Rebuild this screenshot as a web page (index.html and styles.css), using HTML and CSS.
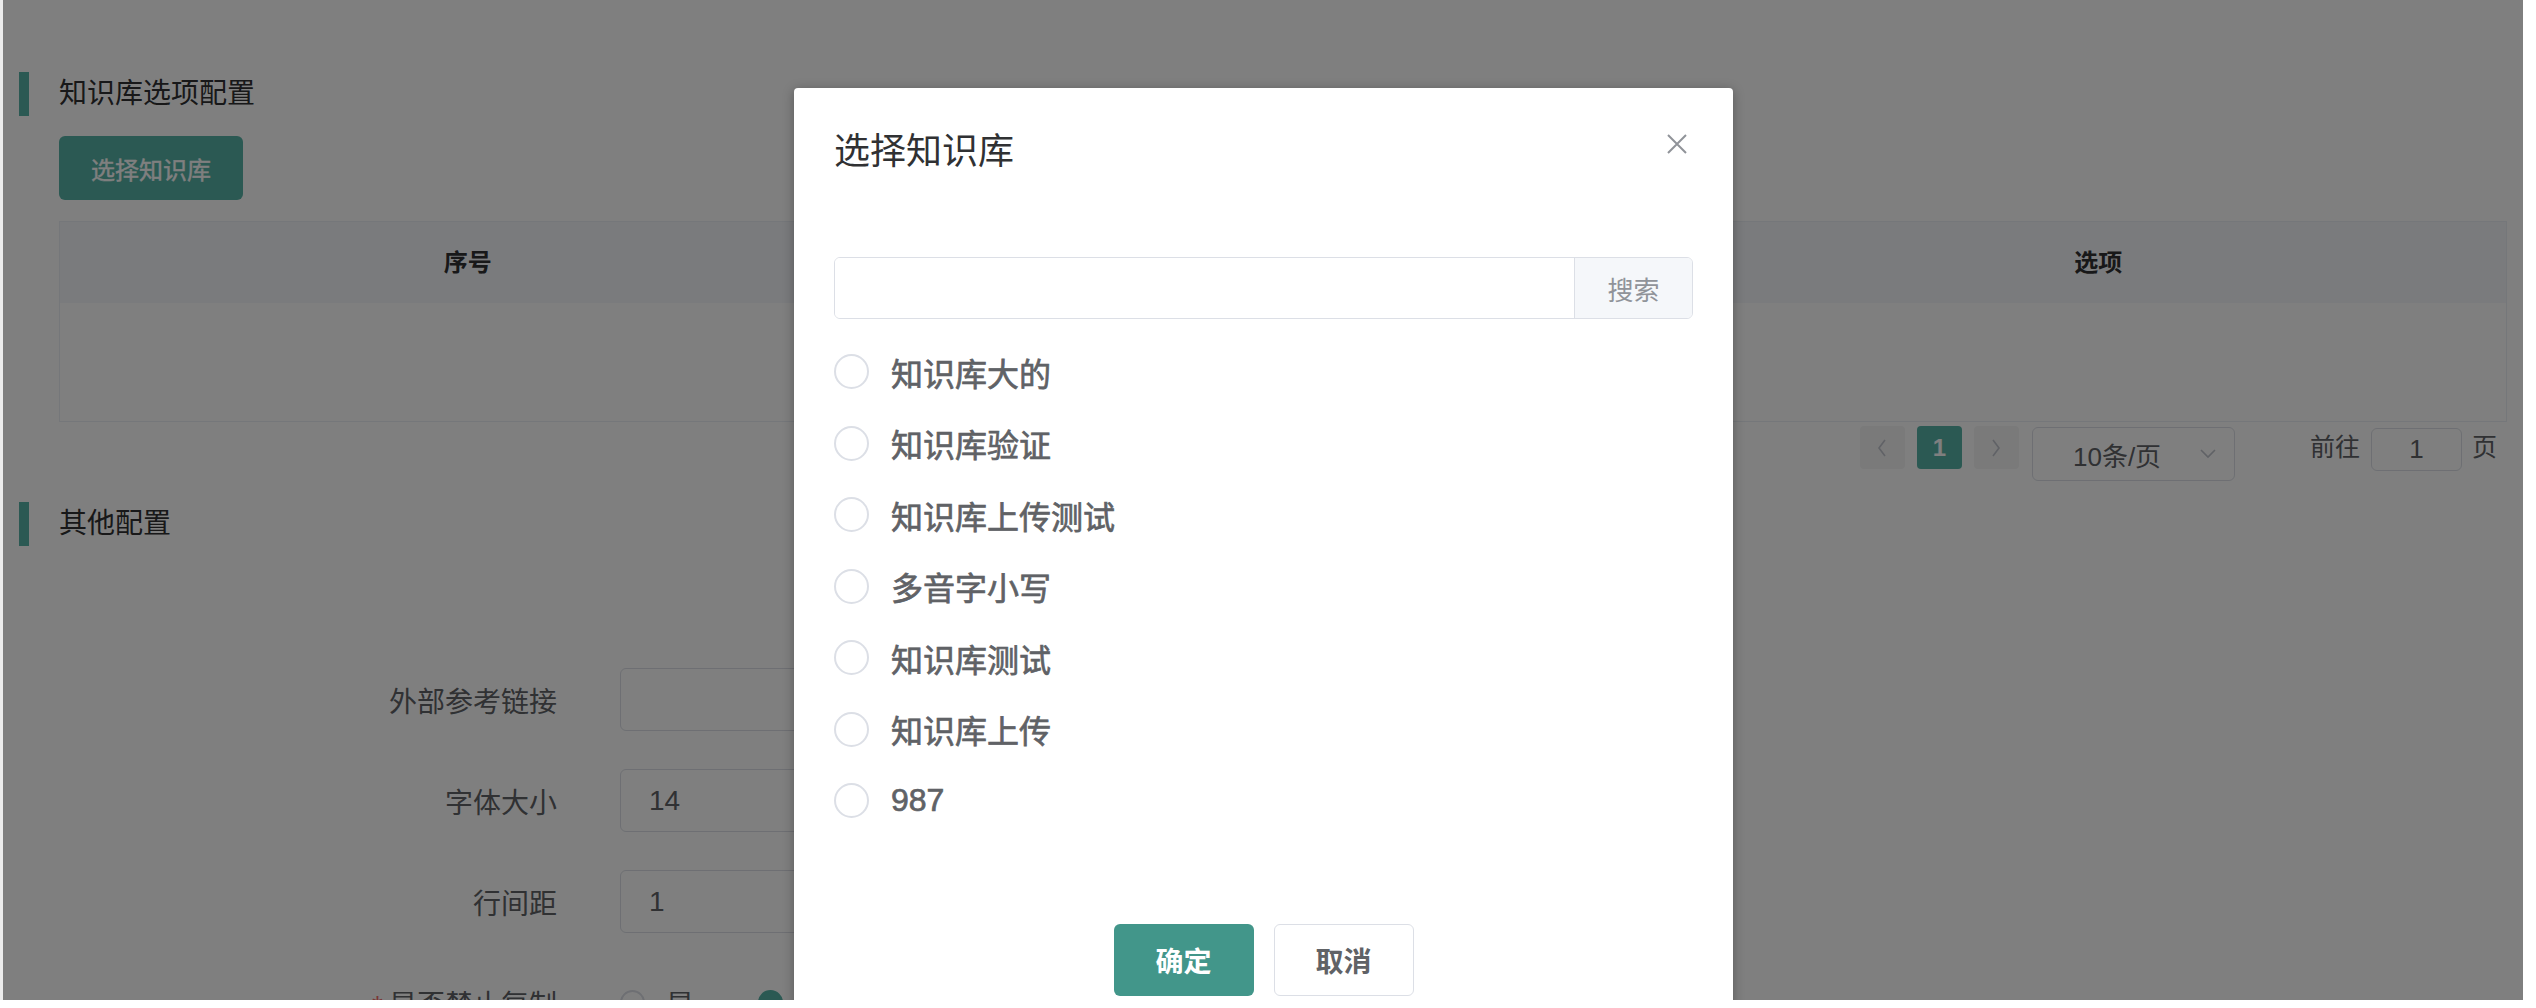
FILE: index.html
```html
<!DOCTYPE html>
<html lang="zh-CN">
<head>
    <meta charset="UTF-8">
    <meta name="viewport" content="width=device-width, initial-scale=1.0">
    <title>知识库配置</title>
    <link rel="stylesheet" href="styles.css">
</head>
<body>

    <div class="page">
        <div class="content">

            <div class="section-title">知识库选项配置</div>
            <div class="section-body">
                <button class="btn-choose" type="button">选择知识库</button>

                <div class="table">
                    <div class="table-head">
                        <div class="th">序号</div>
                        <div class="th">知识库名称</div>
                        <div class="th">选项</div>
                    </div>
                    <div class="table-body">
                        <span class="empty-text">暂无数据</span>
                    </div>
                </div>

                <div class="pager">
                    <button class="pager-btn prev" type="button">
                        <svg width="12" height="20" viewBox="0 0 12 20"><polyline points="9,2 3,10 9,18" fill="none" stroke="#c0c4cc" stroke-width="1.6"/></svg>
                    </button>
                    <button class="pager-num active" type="button">1</button>
                    <button class="pager-btn next" type="button">
                        <svg width="12" height="20" viewBox="0 0 12 20"><polyline points="3,2 9,10 3,18" fill="none" stroke="#c0c4cc" stroke-width="1.6"/></svg>
                    </button>
                    <div class="pager-size">
                        <span>10条/页</span>
                        <svg width="16" height="10" viewBox="0 0 16 10"><polyline points="1,1 8,8 15,1" fill="none" stroke="#c0c4cc" stroke-width="1.6"/></svg>
                    </div>
                    <span class="pager-text goto">前往</span>
                    <input class="pager-input" type="text" value="1">
                    <span class="pager-text unit">页</span>
                </div>
            </div>

            <div class="section-title second">其他配置</div>
            <form class="form">
                <div class="form-row">
                    <label class="form-label">外部参考链接</label>
                    <input class="form-input" type="text">
                </div>
                <div class="form-row">
                    <label class="form-label">字体大小</label>
                    <input class="form-input" type="text" value="14">
                </div>
                <div class="form-row">
                    <label class="form-label">行间距</label>
                    <input class="form-input" type="text" value="1">
                </div>
                <div class="form-row">
                    <label class="form-label required">是否禁止复制</label>
                    <div class="radio-group">
                        <span class="radio"><span class="dot"></span>是</span>
                        <span class="radio checked"><span class="dot"></span>否</span>
                    </div>
                </div>
            </form>
        </div>

        <div class="mask"></div>

        <div class="dialog">
            <div class="dialog-header">
                <span class="dialog-title">选择知识库</span>
                <button class="dialog-close" type="button">
                    <svg width="20" height="20" viewBox="0 0 20 20"><path d="M1 1 L19 19 M19 1 L1 19" stroke="#909399" stroke-width="2"/></svg>
                </button>
            </div>
            <div class="dialog-body">
                <div class="search">
                    <input class="search-input" type="text">
                    <button class="search-btn" type="button">搜索</button>
                </div>
                <div class="kb-list">
                    <label class="kb-item"><span class="kb-radio"></span>知识库大的</label>
                    <label class="kb-item"><span class="kb-radio"></span>知识库验证</label>
                    <label class="kb-item"><span class="kb-radio"></span>知识库上传测试</label>
                    <label class="kb-item"><span class="kb-radio"></span>多音字小写</label>
                    <label class="kb-item"><span class="kb-radio"></span>知识库测试</label>
                    <label class="kb-item"><span class="kb-radio"></span>知识库上传</label>
                    <label class="kb-item"><span class="kb-radio"></span>987</label>
                </div>
            </div>
            <div class="dialog-footer">
                <button class="btn-ok" type="button">确定</button>
                <button class="btn-cancel" type="button">取消</button>
            </div>
        </div>
    </div>

</body>
</html>
```

FILE: styles.css
```css
/* Reset */
* {
    margin: 0;
    padding: 0;
    box-sizing: border-box;
}

body {
    background: #fff;
    font-family: "Liberation Sans", "Noto Sans CJK SC", sans-serif;
    color: #303133;
}

button,
input {
    font-family: inherit;
    outline: none;
}

/* Page under the dialog */
.page {
    position: relative;
    width: 2523px;
    height: 1000px;
    overflow: hidden;
    background: #fff;
    border-left: 3px solid #ececec;
}

.content {
    padding: 72px 16px 0 16px;
}

.section-title {
    height: 44px;
    line-height: 44px;
    border-left: 10px solid #56b2a6;
    padding-left: 30px;
    font-size: 28px;
    color: #303133;
}

.section-title.second {
    margin-top: 21px;
}

.section-body {
    margin-left: 40px;
}

.btn-choose {
    display: block;
    width: 184px;
    height: 64px;
    margin-top: 20px;
    background: #56b2a6;
    color: #fff;
    border: none;
    border-radius: 6px;
    font-size: 24px;
    -webkit-text-stroke: 0.4px #fff;
}

/* Table */
.table {
    margin-top: 21px;
    border: 1px solid #ebeef5;
}

.table-head {
    display: grid;
    grid-template-columns: 1fr 1fr 1fr;
    height: 81px;
    background: #f5f7fa;
}

.th {
    text-align: center;
    line-height: 81px;
    font-size: 24px;
    font-weight: bold;
    color: #303133;
}

.table-body {
    height: 118px;
    display: flex;
    align-items: center;
    justify-content: center;
}

.empty-text {
    font-size: 24px;
    color: #909399;
}

/* Pagination */
.pager {
    display: flex;
    justify-content: flex-end;
    align-items: flex-start;
    margin-top: 4px;
    padding-right: 10px;
}

.pager-btn,
.pager-num {
    width: 45px;
    height: 43px;
    border: none;
    border-radius: 4px;
    background: #f4f4f5;
    display: flex;
    align-items: center;
    justify-content: center;
}

.pager-btn.prev {
    margin-right: 12px;
}

.pager-btn.next {
    margin-left: 12px;
}

.pager-num.active {
    background: #56b2a6;
    color: #fff;
    font-size: 24px;
    font-weight: bold;
}

.pager-size {
    display: flex;
    align-items: center;
    justify-content: space-between;
    width: 203px;
    height: 54px;
    margin: 1px 0 0 13px;
    padding: 0 18px 0 40px;
    border: 1px solid #dcdfe6;
    border-radius: 6px;
    font-size: 26px;
    color: #606266;
}

.pager-text {
    line-height: 43px;
    font-size: 25px;
    color: #606266;
}

.pager-text.goto {
    margin-left: 75px;
}

.pager-text.unit {
    margin-left: 10px;
}

.pager-input {
    width: 91px;
    height: 43px;
    margin: 2px 0 0 11px;
    border: 1px solid #dcdfe6;
    border-radius: 6px;
    text-align: center;
    font-size: 26px;
    color: #606266;
}

/* Form */
.form {
    padding-top: 122px;
}

.form-row {
    display: flex;
    align-items: center;
    height: 63px;
    margin-bottom: 38px;
}

.form-label {
    width: 601px;
    padding-right: 63px;
    text-align: right;
    font-size: 28px;
    color: #606266;
}

.form-label.required::before {
    content: "*";
    color: #f56c6c;
    margin-right: 6px;
}

.form-input {
    width: 900px;
    height: 63px;
    padding: 0 28px;
    border: 1px solid #dcdfe6;
    border-radius: 6px;
    font-size: 28px;
    color: #606266;
}

.radio-group {
    display: flex;
    align-items: center;
}

.radio {
    display: flex;
    align-items: center;
    font-size: 28px;
    color: #606266;
    margin-right: 64px;
}

.radio .dot {
    width: 25px;
    height: 25px;
    margin-right: 21px;
    border: 2px solid #dcdfe6;
    border-radius: 50%;
}

.radio.checked .dot {
    background: #56b2a6;
    border-color: #56b2a6;
}

/* Mask and dialog */
.mask {
    position: absolute;
    top: 0;
    left: 0;
    right: 0;
    bottom: 0;
    background: rgba(0, 0, 0, 0.5);
}

.dialog {
    position: absolute;
    top: 88px;
    left: 791px;
    width: 939px;
    background: #fff;
    border-radius: 4px;
    box-shadow: 0 2px 12px rgba(0, 0, 0, 0.3);
}

.dialog-header {
    position: relative;
    padding: 40px 40px 20px;
}

.dialog-title {
    display: block;
    font-size: 36px;
    line-height: 48px;
    color: #303133;
}

.dialog-close {
    position: absolute;
    top: 46px;
    right: 46px;
    width: 20px;
    height: 20px;
    border: none;
    background: none;
    display: flex;
}

.dialog-body {
    padding: 61px 40px 60px;
}

.search {
    display: flex;
    height: 62px;
    border: 1px solid #dcdfe6;
    border-radius: 6px;
    overflow: hidden;
}

.search-input {
    flex: 1;
    border: none;
    padding: 0 20px;
    font-size: 28px;
}

.search-btn {
    width: 118px;
    border: none;
    border-left: 1px solid #dcdfe6;
    background: #f5f7fa;
    color: #909399;
    font-size: 26px;
}

.kb-list {
    margin-top: 17px;
}

.kb-item {
    display: flex;
    align-items: center;
    height: 71.5px;
    font-size: 32px;
    color: #606266;
    -webkit-text-stroke: 0.7px #606266;
}

.kb-radio {
    width: 35px;
    height: 35px;
    margin-right: 22px;
    border: 2px solid #dcdfe6;
    border-radius: 50%;
}

.dialog-footer {
    display: flex;
    justify-content: center;
    gap: 20px;
    padding: 27px 40px 40px;
}

.btn-ok,
.btn-cancel {
    width: 140px;
    height: 72px;
    border-radius: 6px;
    font-size: 28px;
    font-weight: bold;
}

.btn-ok {
    background: #42968a;
    color: #fff;
    border: none;
}

.btn-cancel {
    background: #fff;
    color: #606266;
    border: 1px solid #dcdfe6;
}
```
